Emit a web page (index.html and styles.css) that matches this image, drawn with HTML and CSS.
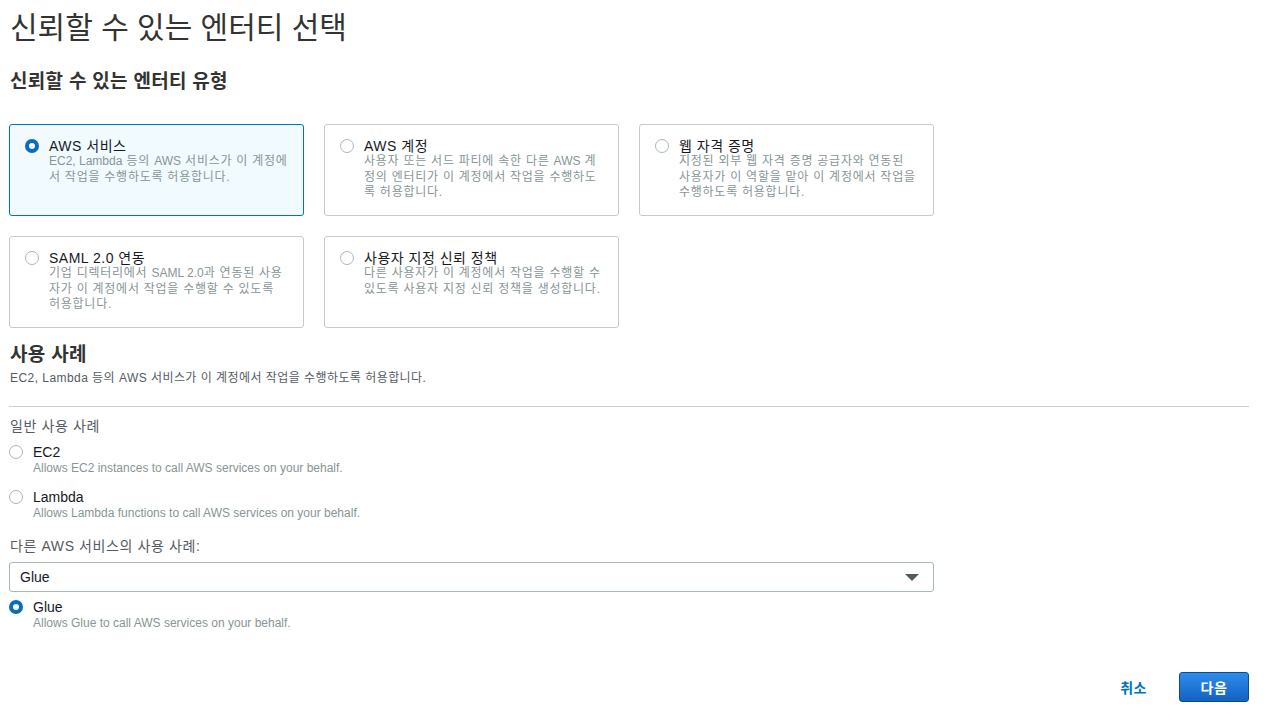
FILE: index.html
```html
<!DOCTYPE html>
<html lang="ko">
<head>
  <meta charset="UTF-8">
  <title>신뢰할 수 있는 엔터티 선택</title>
  <link rel="stylesheet" href="styles.css">
</head>
<body>
  <div class="page">
    <h1 class="title">신뢰할 수 있는 엔터티 선택</h1>
    <h2 class="section">신뢰할 수 있는 엔터티 유형</h2>

    <div class="cards">
      <div class="card selected">
        <span class="radio on"></span>
        <div>
          <div class="card-title">AWS 서비스</div>
          <div class="card-desc"><span class="en">EC2, Lambda</span> 등의 <span class="en">AWS</span> 서비스가 이 계정에서 작업을 수행하도록 허용합니다.</div>
        </div>
      </div>
      <div class="card">
        <span class="radio"></span>
        <div>
          <div class="card-title">AWS 계정</div>
          <div class="card-desc">사용자 또는 서드 파티에 속한 다른 <span class="en">AWS</span> 계정의 엔터티가 이 계정에서 작업을 수행하도록 허용합니다.</div>
        </div>
      </div>
      <div class="card">
        <span class="radio"></span>
        <div>
          <div class="card-title">웹 자격 증명</div>
          <div class="card-desc">지정된 외부 웹 자격 증명 공급자와 연동된 사용자가 이 역할을 맡아 이 계정에서 작업을 수행하도록 허용합니다.</div>
        </div>
      </div>
      <div class="card">
        <span class="radio"></span>
        <div>
          <div class="card-title">SAML 2.0 연동</div>
          <div class="card-desc">기업 디렉터리에서 <span class="en">SAML 2.0</span>과 연동된 사용자가 이 계정에서 작업을 수행할 수 있도록 허용합니다.</div>
        </div>
      </div>
      <div class="card">
        <span class="radio"></span>
        <div>
          <div class="card-title">사용자 지정 신뢰 정책</div>
          <div class="card-desc">다른 사용자가 이 계정에서 작업을 수행할 수 있도록 사용자 지정 신뢰 정책을 생성합니다.</div>
        </div>
      </div>
    </div>

    <h2 class="section usecase">사용 사례</h2>
    <p class="section-desc">EC2, Lambda 등의 AWS 서비스가 이 계정에서 작업을 수행하도록 허용합니다.</p>
    <div class="divider"></div>

    <div class="group-label">일반 사용 사례</div>
    <div class="option first">
      <span class="radio"></span>
      <div>
        <div class="opt-title">EC2</div>
        <div class="opt-desc">Allows EC2 instances to call AWS services on your behalf.</div>
      </div>
    </div>
    <div class="option">
      <span class="radio"></span>
      <div>
        <div class="opt-title">Lambda</div>
        <div class="opt-desc">Allows Lambda functions to call AWS services on your behalf.</div>
      </div>
    </div>

    <div class="group-label other">다른 AWS 서비스의 사용 사례:</div>
    <div class="select">
      <span>Glue</span>
      <span class="caret"></span>
    </div>
    <div class="option glue">
      <span class="radio on"></span>
      <div>
        <div class="opt-title">Glue</div>
        <div class="opt-desc">Allows Glue to call AWS services on your behalf.</div>
      </div>
    </div>

    <div class="actions">
      <a href="#" class="cancel">취소</a>
      <button class="next">다음</button>
    </div>
  </div>
</body>
</html>
```

FILE: styles.css
```css
body{
  margin: 0;
  background: #fff;
  font-family: "Liberation Sans", Arial, "Noto Sans CJK KR", sans-serif;
  color: #16191f;
}
.page{
  width: 1240px;
  margin-left: 9px;
}
.title{
  margin: 10px 0 0 1px;
  font-size: 30px;
  line-height: 36px;
  font-weight: normal;
  color: #333;
}
.section{
  margin: 24px 0 0 1px;
  font-size: 19px;
  line-height: 24px;
  letter-spacing: 0.3px;
  font-weight: bold;
  color: #333;
}
.cards{
  display: grid;
  grid-template-columns: repeat(3, 295px);
  grid-auto-rows: 92px;
  gap: 20px;
  margin-top: 30px;
}
.card{
  box-sizing: border-box;
  display: flex;
  align-items: flex-start;
  gap: 10px;
  padding: 13px 14px 0 15px;
  border: 1px solid #c9c9c9;
  border-radius: 3px;
  background: #fff;
}
.card.selected{
  border-color: #0073bb;
  background: #f1faff;
}
.radio{
  flex: none;
  box-sizing: border-box;
  width: 14px;
  height: 14px;
  margin-top: 1px;
  border: 1px solid #aab7b8;
  border-radius: 50%;
  background: #fff;
}
.radio.on{
  border: 4px solid #0a6cbd;
  background: #fff;
}
.card-title{
  font-size: 14px;
  line-height: 16px;
  letter-spacing: 0.5px;
  color: #16191f;
}
.card-desc{
  font-size: 12px;
  line-height: 15.5px;
  letter-spacing: 0.75px;
  color: #879596;
}
.card-desc .en{
  letter-spacing: 0;
}
.usecase{
  margin-top: 15px;
}
.section-desc{
  margin: 3px 0 0 1px;
  font-size: 12px;
  line-height: 16px;
  letter-spacing: 0.45px;
  color: #545b64;
}
.divider{
  margin-top: 20px;
  border-top: 1px solid #cfcfcf;
}
.group-label{
  margin: 9px 0 0 1px;
  font-size: 14px;
  line-height: 20px;
  letter-spacing: 0.6px;
  color: #545b64;
}
.group-label.other{
  margin-top: 15px;
}
.option{
  display: flex;
  align-items: flex-start;
  gap: 10px;
  margin-top: 13px;
}
.option.first{
  margin-top: 8px;
}
.option.glue{
  margin-top: 7px;
}
.opt-title{
  font-size: 14px;
  line-height: 16px;
  color: #16191f;
}
.opt-desc{
  font-size: 12px;
  line-height: 16px;
  color: #879596;
}
.select{
  box-sizing: border-box;
  display: flex;
  align-items: center;
  justify-content: space-between;
  width: 925px;
  height: 30px;
  margin-top: 6px;
  padding: 0 14px 0 10px;
  border: 1px solid #aab7b8;
  border-radius: 3px;
  font-size: 14px;
  color: #16191f;
}
.caret{
  width: 0;
  height: 0;
  border-left: 7px solid transparent;
  border-right: 7px solid transparent;
  border-top: 7px solid #545b64;
}
.actions{
  display: flex;
  justify-content: flex-end;
  align-items: center;
  gap: 32px;
  margin-top: 41px;
}
.cancel{
  font-size: 14px;
  font-weight: bold;
  letter-spacing: 0.5px;
  color: #0073bb;
  text-decoration: none;
}
.next{
  width: 70px;
  height: 30px;
  padding: 0;
  border: 1px solid #0b4c8c;
  border-radius: 3px;
  background: linear-gradient(#2d8ceb, #1462c2);
  color: #fff;
  font-family: "Liberation Sans", Arial, "Noto Sans CJK KR", sans-serif;
  font-size: 14px;
  font-weight: bold;
  letter-spacing: 0.5px;
  cursor: pointer;
}
```
